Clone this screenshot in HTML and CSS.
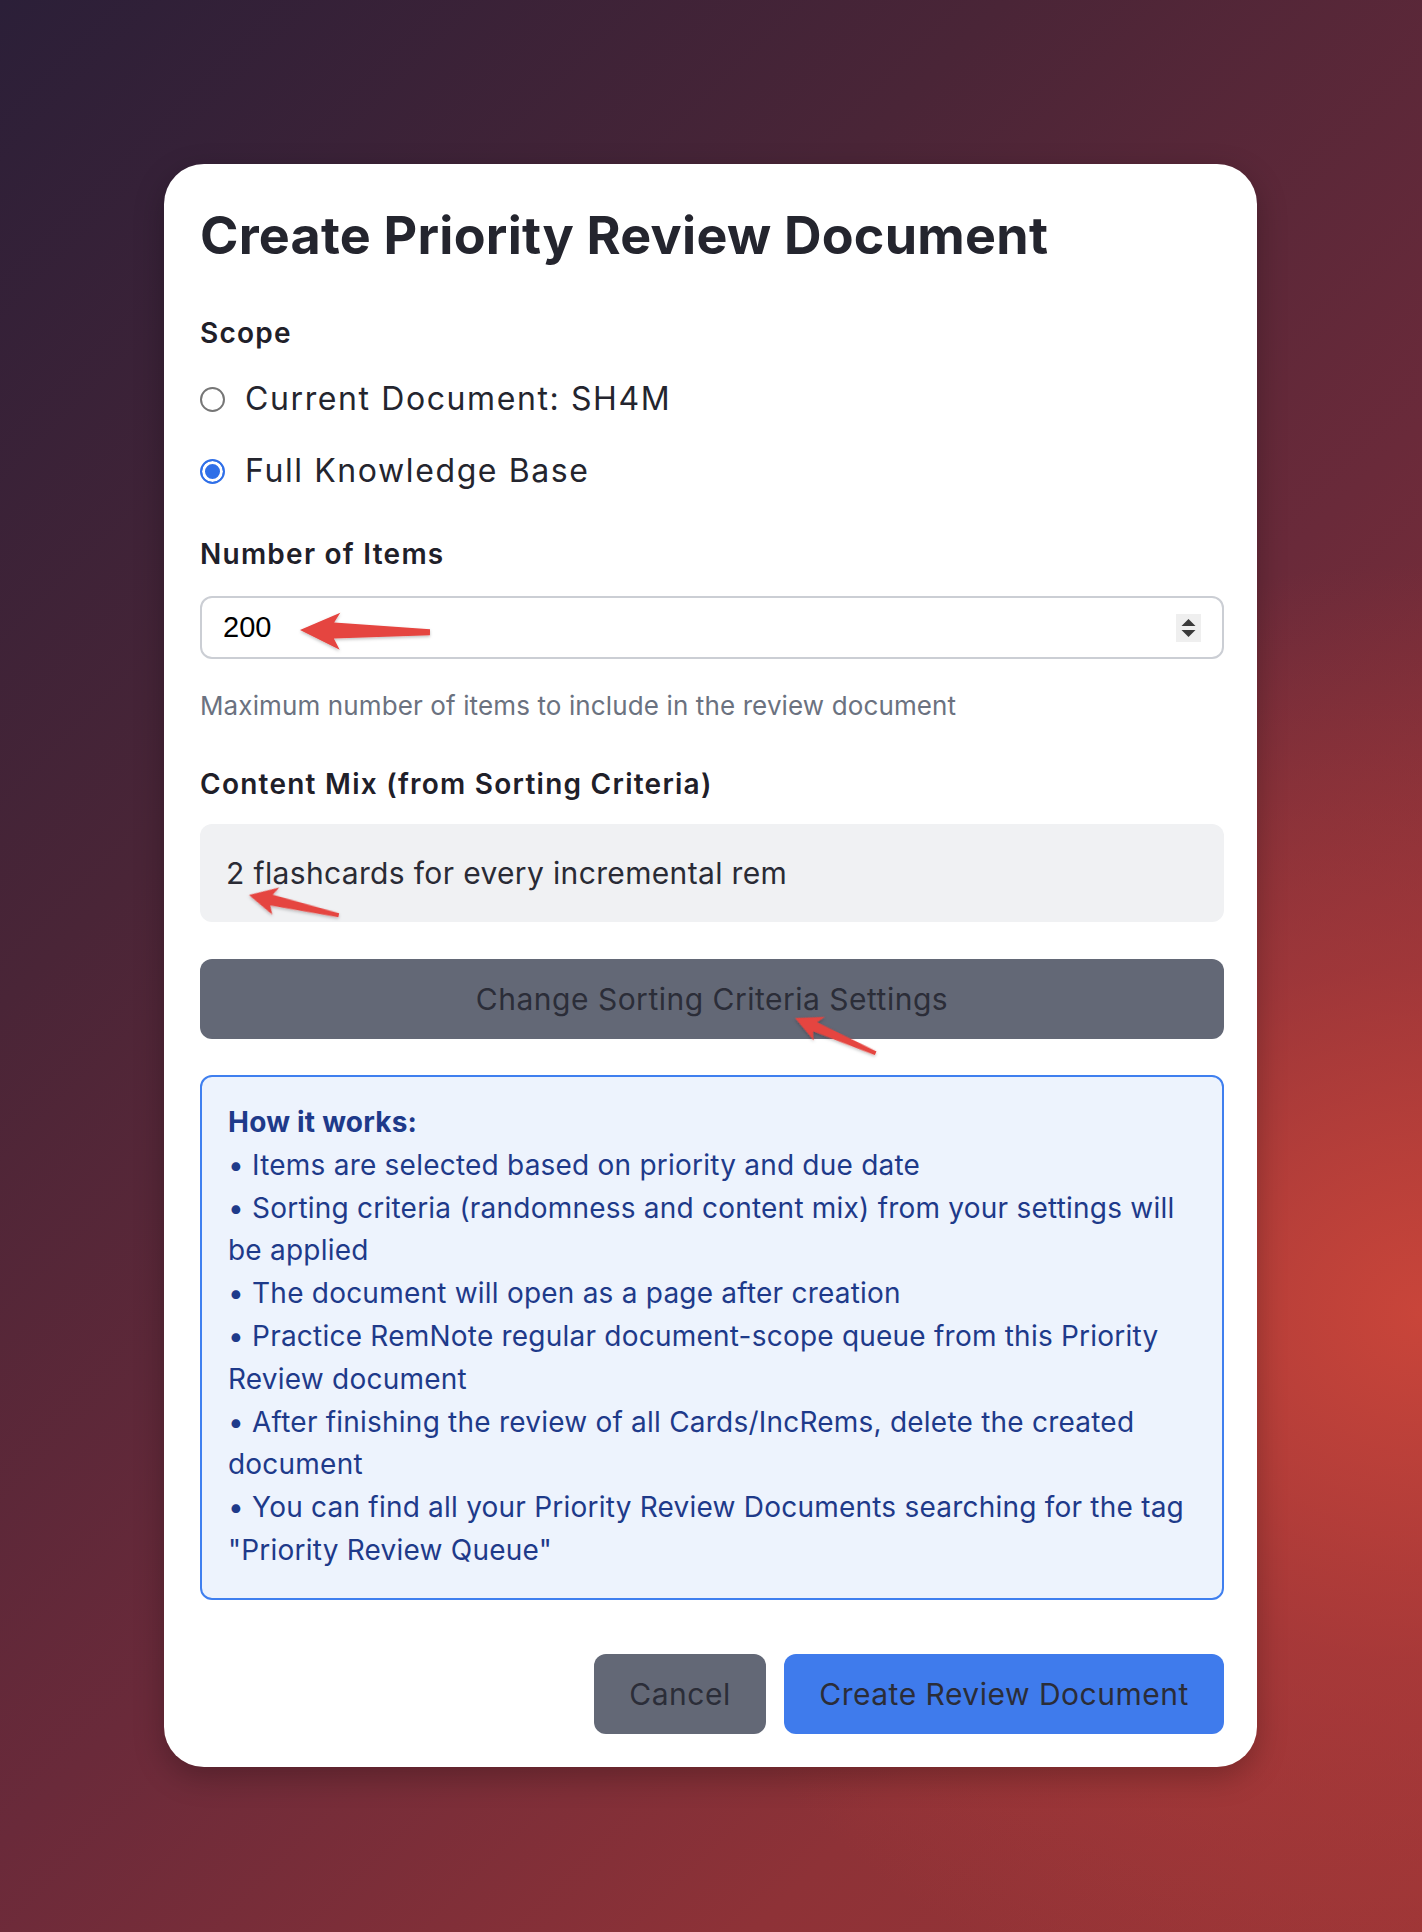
FILE: index.html
```html
<!DOCTYPE html>
<html lang="en">
<head>
<meta charset="utf-8">
<title>Create Priority Review Document</title>
<link rel="stylesheet" href="styles.css">
</head>
<body>
<div class="stage">
  <div class="card">
    <h1 class="title">Create Priority Review Document</h1>

    <div class="label scope-label">Scope</div>
    <div class="radio-row first">
      <span class="radio"></span>
      <span class="radio-text">Current Document: SH4M</span>
    </div>
    <div class="radio-row">
      <span class="radio checked"></span>
      <span class="radio-text">Full Knowledge Base</span>
    </div>

    <div class="label items-label">Number of Items</div>
    <div class="number-input">
      <span class="number-value">200</span>
      <span class="spinner">
        <svg width="25" height="28" viewBox="0 0 25 28"><path d="M12.5 5 L19.5 12 L5.5 12 Z" fill="#3a3a3a"/><path d="M12.5 23 L19.5 16 L5.5 16 Z" fill="#3a3a3a"/></svg>
      </span>
    </div>
    <div class="help">Maximum number of items to include in the review document</div>

    <div class="label mix-label">Content Mix (from Sorting Criteria)</div>
    <div class="mix-box">2 flashcards for every incremental rem</div>

    <div class="sort-button">Change Sorting Criteria Settings</div>

    <div class="info">
      <div class="info-title">How it works:</div>
      <div>• Items are selected based on priority and due date</div>
      <div>• Sorting criteria (randomness and content mix) from your settings will be applied</div>
      <div>• The document will open as a page after creation</div>
      <div>• Practice RemNote regular document-scope queue from this Priority Review document</div>
      <div>• After finishing the review of all Cards/IncRems, delete the created document</div>
      <div>• You can find all your Priority Review Documents searching for the tag "Priority Review Queue"</div>
    </div>

    <div class="actions">
      <div class="btn cancel">Cancel</div>
      <div class="btn create">Create Review Document</div>
    </div>
  </div>

  <svg class="annotations" width="1422" height="1932" viewBox="0 0 1422 1932">
    <defs>
      <filter id="sh" x="-20%" y="-50%" width="140%" height="200%">
        <feDropShadow dx="0" dy="1.5" stdDeviation="1.5" flood-color="#000" flood-opacity="0.25"/>
      </filter>
    </defs>
    <g fill="#e5443f" filter="url(#sh)">
      <polygon transform="translate(300 630) rotate(1)" points="0,0 40,-18 34,-8 130,-3 130,3 34,8 40,19"/>
      <polygon transform="translate(249 895) rotate(12.7)" points="0,0 28,-14 23,-5.5 92,-2 92,2 23,5.5 27,14"/>
      <polygon transform="translate(795 1018) rotate(23.6)" points="0,0 27,-13 22,-5 88,-2 88,2 22,5 26,13"/>
    </g>
  </svg>
</div>
</body>
</html>
```

FILE: styles.css
```css
* { box-sizing: border-box; }

html, body {
  margin: 0;
  padding: 0;
}

body {
  width: 1422px;
  min-height: 1932px;
  font-family: Inter, "Noto Sans", "Liberation Sans", sans-serif;
  color: #24252e;
  background:
    radial-gradient(ellipse 1100px 1000px at 100% 68%, rgba(204, 70, 58, 0.95) 0%, rgba(180, 60, 58, 0.6) 35%, rgba(150, 50, 55, 0) 75%),
    linear-gradient(135deg, #2b1f38 0%, #4a2537 30%, #6a2a3a 55%, #8e3237 80%, #9a3536 100%);
}

.stage {
  position: relative;
  width: 1422px;
  height: 1932px;
  padding-top: 164px;
  padding-left: 164px;
}

.card {
  width: 1093px;
  background: #ffffff;
  border-radius: 40px;
  padding: 42px 33px 33px 36px;
  display: flex;
  flex-direction: column;
  box-shadow: 0 10px 30px rgba(0, 0, 0, 0.25);
}

.title {
  margin: 0;
  font-size: 52px;
  line-height: 60px;
  font-weight: 700;
  color: #24252e;
  letter-spacing: 0.25px;
}

.label {
  font-size: 28px;
  line-height: 36px;
  font-weight: 600;
  color: #1f2029;
  letter-spacing: 1.25px;
}

.scope-label { margin-top: 49px; }
.items-label { margin-top: 43px; }
.mix-label { margin-top: 43px; }

.radio-row {
  display: flex;
  align-items: center;
  gap: 20px;
  height: 44px;
  margin-top: 28px;
}
.radio-row.first { margin-top: 26px; }

.radio {
  width: 25px;
  height: 25px;
  border-radius: 50%;
  border: 2px solid #767676;
  background: #fff;
  flex: none;
}
.radio.checked {
  border: 2.5px solid #2f6fe8;
  box-shadow: inset 0 0 0 3px #fff;
  background: #2f6fe8;
}

.radio-text {
  font-size: 32px;
  line-height: 44px;
  color: #24252e;
  letter-spacing: 1.6px;
}

.number-input {
  margin-top: 24px;
  height: 63px;
  border: 2px solid #cbced4;
  border-radius: 12px;
  display: flex;
  align-items: center;
  justify-content: space-between;
  padding: 0 21px 0 21px;
}

.number-value {
  font-family: "Liberation Sans", Arial, sans-serif;
  font-size: 29px;
  color: #000;
}

.spinner {
  width: 25px;
  height: 28px;
  background: #efefef;
  display: flex;
  align-items: center;
  justify-content: center;
}

.help {
  margin-top: 30px;
  font-size: 26px;
  line-height: 34px;
  color: #6b7280;
  letter-spacing: 0.12px;
}

.mix-box {
  margin-top: 22px;
  height: 98px;
  background: #f0f1f3;
  border-radius: 12px;
  padding: 0 26px;
  display: flex;
  align-items: center;
  font-size: 30px;
  color: #2a2b35;
  letter-spacing: 0.35px;
}

.sort-button {
  margin-top: 37px;
  height: 80px;
  background: #636876;
  border-radius: 12px;
  display: flex;
  align-items: center;
  justify-content: center;
  font-size: 30px;
  color: #2b2d38;
  letter-spacing: 0.5px;
}

.info {
  margin-top: 36px;
  background: #edf3fd;
  border: 2px solid #3f7fef;
  border-radius: 12px;
  padding: 24px 26px 26px 26px;
  font-size: 28px;
  line-height: 42.8px;
  color: #1e3a8a;
  letter-spacing: 0.22px;
}

.info-title {
  font-weight: 700;
}

.actions {
  margin-top: 54px;
  display: flex;
  justify-content: flex-end;
  gap: 18px;
}

.btn {
  height: 80px;
  border-radius: 12px;
  display: flex;
  align-items: center;
  justify-content: center;
  font-size: 30px;
  color: #2b2d38;
  letter-spacing: 0.5px;
}

.cancel {
  width: 172px;
  background: #636876;
}

.create {
  width: 440px;
  background: #3f7bec;
}

.annotations {
  position: absolute;
  left: 0;
  top: 0;
  pointer-events: none;
}
```
